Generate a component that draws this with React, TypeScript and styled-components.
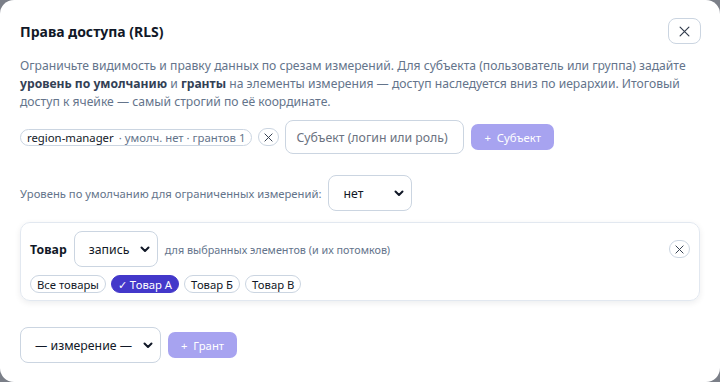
import React from 'react'
import styled, { createGlobalStyle } from 'styled-components'

const GlobalStyle = createGlobalStyle`
  html, body {
    margin: 0;
    padding: 0;
    background: #7b7f88;
  }
  body {
    font-family: "Noto Sans", "Open Sans", sans-serif;
  }
`

const Chevron = () => (
  <svg width="10" height="7" viewBox="0 0 10 7">
    <path d="M1.5 1.5 L5 5 L8.5 1.5" fill="none" stroke="#111827" strokeWidth="2" strokeLinecap="round" strokeLinejoin="round" />
  </svg>
)

const Cross = ({ size = 10 }: { size?: number }) => (
  <svg width={size} height={size} viewBox="0 0 10 10">
    <path d="M1 1 L9 9 M9 1 L1 9" fill="none" stroke="#374151" strokeWidth="1.1" strokeLinecap="round" />
  </svg>
)

const App = () => {
  const items = ['Все товары', 'Товар А', 'Товар Б', 'Товар В']
  const selected = 'Товар А'
  return (
    <>
      <GlobalStyle />
      <Modal>
        <Header>
          <Title>Права доступа (RLS)</Title>
          <CloseButton><Cross size={11} /></CloseButton>
        </Header>
        <Description>
          Ограничьте видимость и правку данных по срезам измерений. Для субъекта (пользователь или группа) задайте{' '}
          <b>уровень по умолчанию</b> и <b>гранты</b> на элементы измерения — доступ наследуется вниз по иерархии. Итоговый
          доступ к ячейке — самый строгий по её координате.
        </Description>

        <SubjectRow>
          <SubjectChip>
            <strong>region-manager</strong>
            <span>· умолч. нет · грантов 1</span>
          </SubjectChip>
          <RoundX><Cross size={9} /></RoundX>
          <Input placeholder="Субъект (логин или роль)" />
          <PrimaryButton>+&nbsp; Субъект</PrimaryButton>
        </SubjectRow>

        <LevelRow>
          <Label>Уровень по умолчанию для ограниченных измерений:</Label>
          <Select width={84}>
            <span>нет</span>
            <Chevron />
          </Select>
        </LevelRow>

        <Card>
          <CardHeader>
            <DimName>Товар</DimName>
            <Select width={84}>
              <span>запись</span>
              <Chevron />
            </Select>
            <Hint>для выбранных элементов (и их потомков)</Hint>
            <Spacer />
            <RoundX><Cross size={9} /></RoundX>
          </CardHeader>
          <Chips>
            {items.map((it) => (
              <Chip key={it} active={it === selected}>
                {it === selected ? '✓ ' + it : it}
              </Chip>
            ))}
          </Chips>
        </Card>

        <BottomRow>
          <Select width={141}>
            <span>— измерение —</span>
            <Chevron />
          </Select>
          <PrimaryButton>+&nbsp; Грант</PrimaryButton>
        </BottomRow>
      </Modal>
    </>
  )
}

export default App

const Modal = styled.div`
  box-sizing: border-box;
  width: 720px;
  height: 382px;
  background: #ffffff;
  border-radius: 14px;
  padding: 18px 20px 19px 20px;
  display: flex;
  flex-direction: column;
  overflow: hidden;
`

const Header = styled.div`
  display: flex;
  align-items: center;
  justify-content: space-between;
  height: 26px;
`

const Title = styled.h2`
  margin: 0;
  font-size: 14px;
  font-weight: 700;
  color: #111827;
`

const CloseButton = styled.button`
  box-sizing: border-box;
  width: 33px;
  height: 26px;
  margin-right: -1px;
  border: 1px solid #cbd5e1;
  border-radius: 8px;
  background: #fff;
  display: flex;
  align-items: center;
  justify-content: center;
  padding: 0;
`

const Description = styled.p`
  margin: 13px 0 0 0;
  font-size: 12.15px;
  line-height: 18px;
  color: #64748b;
  b {
    color: #334155;
    font-weight: 700;
  }
`

const SubjectRow = styled.div`
  display: flex;
  align-items: center;
  gap: 6px;
  margin-top: 9px;
`

const SubjectChip = styled.div`
  display: flex;
  align-items: center;
  height: 17px;
  box-sizing: border-box;
  border: 1px solid #cbd5e1;
  border-radius: 9px;
  padding: 0 6px;
  font-size: 11.35px;
  white-space: nowrap;
  strong {
    font-weight: 400;
    color: #111827;
    margin-right: 5px;
  }
  span {
    color: #64748b;
  }
`

const RoundX = styled.button`
  box-sizing: border-box;
  width: 21px;
  height: 18px;
  border: 1px solid #cbd5e1;
  border-radius: 9px;
  background: #fff;
  display: flex;
  align-items: center;
  justify-content: center;
  padding: 0;
`

const Input = styled.input`
  box-sizing: border-box;
  width: 179px;
  height: 34px;
  border: 1px solid #cbd5e1;
  border-radius: 8px;
  padding: 0 10px;
  font-family: inherit;
  font-size: 12.3px;
  color: #111827;
  outline: none;
  &::placeholder {
    color: #6b7280;
  }
`

const PrimaryButton = styled.button`
  box-sizing: border-box;
  height: 26px;
  margin-left: 1px;
  padding: 0 13px;
  border: none;
  border-radius: 7px;
  background: #a7a3f0;
  color: #ffffff;
  font-family: inherit;
  font-size: 11.3px;
  white-space: nowrap;
`

const LevelRow = styled.div`
  display: flex;
  align-items: center;
  gap: 7px;
  margin-top: 21px;
`

const Label = styled.span`
  font-size: 11.25px;
  color: #64748b;
`

const Select = styled.div<{ width: number }>`
  box-sizing: border-box;
  width: ${(p) => p.width}px;
  height: 36px;
  border: 1px solid #cbd5e1;
  border-radius: 8px;
  background: #fff;
  display: flex;
  align-items: center;
  justify-content: space-between;
  padding: 0 7px 0 14px;
  font-size: 12.3px;
  color: #111827;
  white-space: nowrap;
`

const Card = styled.div`
  box-sizing: border-box;
  margin-top: 11px;
  border: 1px solid #e2e8f0;
  border-radius: 10px;
  box-shadow: 0 2px 6px rgba(15, 23, 42, 0.08);
  padding: 8px 9px 7px 9px;
  display: flex;
  flex-direction: column;
  gap: 8px;
`

const CardHeader = styled.div`
  display: flex;
  align-items: center;
  gap: 7px;
`

const DimName = styled.span`
  font-size: 12.3px;
  font-weight: 700;
  color: #111827;
`

const Hint = styled.span`
  font-size: 10.8px;
  color: #64748b;
`

const Spacer = styled.div`
  flex: 1;
`

const Chips = styled.div`
  display: flex;
  gap: 5px;
`

const Chip = styled.span<{ active?: boolean }>`
  box-sizing: border-box;
  height: 18px;
  display: flex;
  align-items: center;
  padding: 0 6px;
  border-radius: 9px;
  border: 1px solid ${(p) => (p.active ? '#4338ca' : '#cbd5e1')};
  background: ${(p) => (p.active ? '#4338ca' : '#fff')};
  color: ${(p) => (p.active ? '#fff' : '#111827')};
  font-size: 11.3px;
  white-space: nowrap;
`

const BottomRow = styled.div`
  display: flex;
  align-items: center;
  gap: 6px;
  margin-top: 26px;
`
